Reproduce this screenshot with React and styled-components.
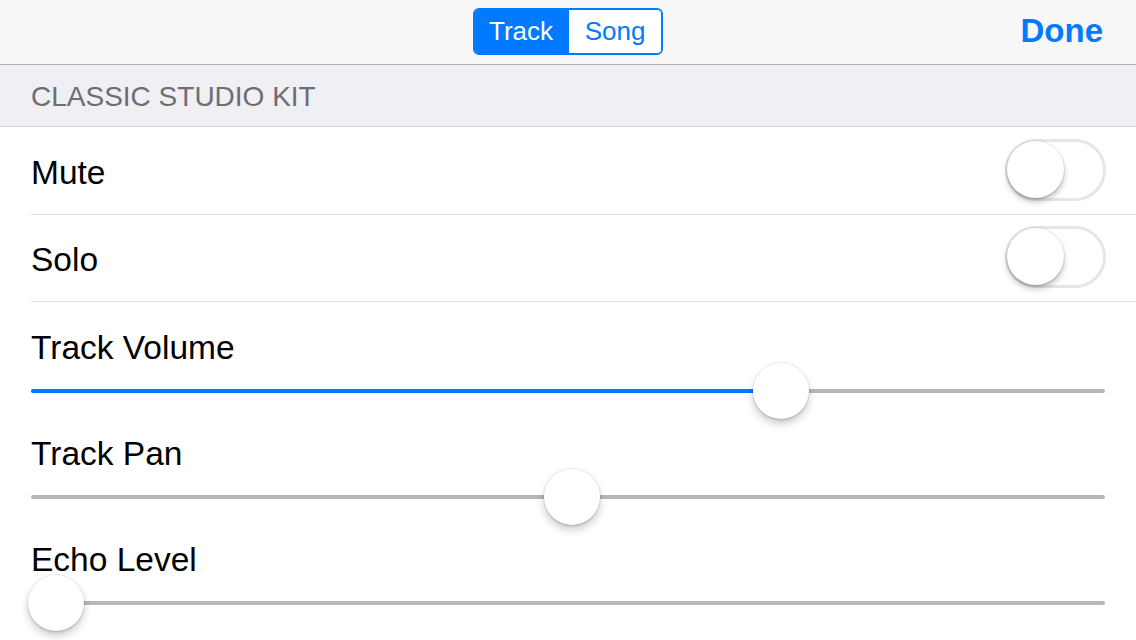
import React from 'react'
import styled, { createGlobalStyle } from 'styled-components'

const GlobalStyle = createGlobalStyle`
    html, body {
        margin: 0;
        padding: 0;
        background: #ffffff;
        overflow: hidden;
    }
    body {
        font-family: "Liberation Sans", Arial, sans-serif;
        -webkit-font-smoothing: antialiased;
    }
`

const blue = '#007aff'

function Toggle({ on }) {
    return (
        <Switch on={on}>
            <Knob on={on} />
        </Switch>
    )
}

function Slider({ value, fill }) {
    // thumb travel measured from the reference: left edge -3px .. 1029px
    const left = -3 + value * 1032
    return (
        <SliderArea>
            <Track>
                {fill && <Fill style={{ width: `${left + 28}px` }} />}
            </Track>
            <Thumb style={{ left: `${left}px` }} />
        </SliderArea>
    )
}

function App() {
    const toggles = ['Mute', 'Solo']
    const sliders = [
        { label: 'Track Volume', value: 0.7025, fill: true },
        { label: 'Track Pan', value: 0.5 },
        { label: 'Echo Level', value: 0 },
    ]

    return (
        <>
            <GlobalStyle />
            <Page>
                <NavBar>
                    <Spacer />
                    <Segmented>
                        <Segment active>Track</Segment>
                        <Segment>Song</Segment>
                    </Segmented>
                    <DoneWrap>
                        <Done>Done</Done>
                    </DoneWrap>
                </NavBar>

                <SectionHeader>CLASSIC STUDIO KIT</SectionHeader>

                <List>
                    {toggles.map((t) => (
                        <ToggleRow key={t}>
                            <Label>{t}</Label>
                            <Toggle on={false} />
                        </ToggleRow>
                    ))}
                    {sliders.map((s) => (
                        <SliderRow key={s.label}>
                            <SliderLabel>{s.label}</SliderLabel>
                            <Slider value={s.value} fill={s.fill} />
                        </SliderRow>
                    ))}
                </List>
            </Page>
        </>
    )
}

export default App

const Page = styled.div`
    width: 1136px;
    height: 640px;
    display: flex;
    flex-direction: column;
    background: #ffffff;
`

const NavBar = styled.div`
    height: 64px;
    flex-shrink: 0;
    background: #f7f7f7;
    border-bottom: 1px solid #b2b2b2;
    display: grid;
    grid-template-columns: 1fr auto 1fr;
    align-items: center;
`

const Spacer = styled.div``

const Segmented = styled.div`
    display: flex;
    height: 47px;
    width: 190px;
    box-sizing: border-box;
    border: 2px solid ${blue};
    border-radius: 6px;
    overflow: hidden;
    margin-top: -1px;
`

const Segment = styled.div`
    flex: 1;
    display: flex;
    align-items: center;
    justify-content: center;
    font-size: 26px;
    color: ${(p) => (p.active ? '#ffffff' : blue)};
    background: ${(p) => (p.active ? blue : '#ffffff')};
    border-left: ${(p) => (p.active ? 'none' : `2px solid ${blue}`)};
    padding-bottom: 1px;
`

const DoneWrap = styled.div`
    display: flex;
    justify-content: flex-end;
    padding-right: 33px;
`

const Done = styled.div`
    font-size: 33px;
    font-weight: bold;
    color: ${blue};
    margin-top: -3px;
`

const SectionHeader = styled.div`
    height: 62px;
    flex-shrink: 0;
    box-sizing: border-box;
    background: #efeff4;
    border-bottom: 1px solid #d6d6da;
    display: flex;
    align-items: center;
    padding-left: 31px;
    padding-top: 3px;
    font-size: 28px;
    color: #6d6d72;
`

const List = styled.div`
    display: flex;
    flex-direction: column;
    padding-top: 1px;
`

const ToggleRow = styled.div`
    height: 87px;
    box-sizing: border-box;
    margin-left: 31px;
    padding-right: 30px;
    border-bottom: 1px solid #dcdce0;
    display: flex;
    align-items: center;
    justify-content: space-between;
`

const Label = styled.div`
    font-size: 33.5px;
    color: #000000;
    line-height: 40px;
    margin-top: 3px;
`

const Switch = styled.div`
    position: relative;
    width: 101px;
    height: 62px;
    box-sizing: border-box;
    border-radius: 31px;
    border: 3px solid #e6e6e6;
    background: ${(p) => (p.on ? '#4cd964' : '#ffffff')};
    margin-top: -2px;
`

const Knob = styled.div`
    position: absolute;
    top: -1px;
    left: ${(p) => (p.on ? '41px' : '-1px')};
    width: 57px;
    height: 57px;
    border-radius: 50%;
    background: #ffffff;
    box-shadow: 0 0 0 1px rgba(0, 0, 0, 0.06), 0 4px 6px rgba(0, 0, 0, 0.22),
        0 2px 2px rgba(0, 0, 0, 0.1);
`

const SliderRow = styled.div`
    height: 106px;
    box-sizing: border-box;
    padding: 24px 31px 0 31px;
    display: flex;
    flex-direction: column;
`

const SliderLabel = styled.div`
    font-size: 33.5px;
    line-height: 44px;
    color: #000000;
`

const SliderArea = styled.div`
    position: relative;
    height: 38px;
    box-sizing: border-box;
    padding-top: 4px;
    display: flex;
    align-items: center;
`

const Track = styled.div`
    position: relative;
    width: 100%;
    height: 4px;
    border-radius: 2px;
    background: #b7b7b7;
    overflow: hidden;
`

const Fill = styled.div`
    height: 100%;
    background: ${blue};
`

const Thumb = styled.div`
    position: absolute;
    top: -7px;
    width: 56px;
    height: 56px;
    border-radius: 50%;
    background: #ffffff;
    box-shadow: 0 0 0 1px rgba(0, 0, 0, 0.06), 0 5px 8px rgba(0, 0, 0, 0.2),
        0 2px 2px rgba(0, 0, 0, 0.08);
`
